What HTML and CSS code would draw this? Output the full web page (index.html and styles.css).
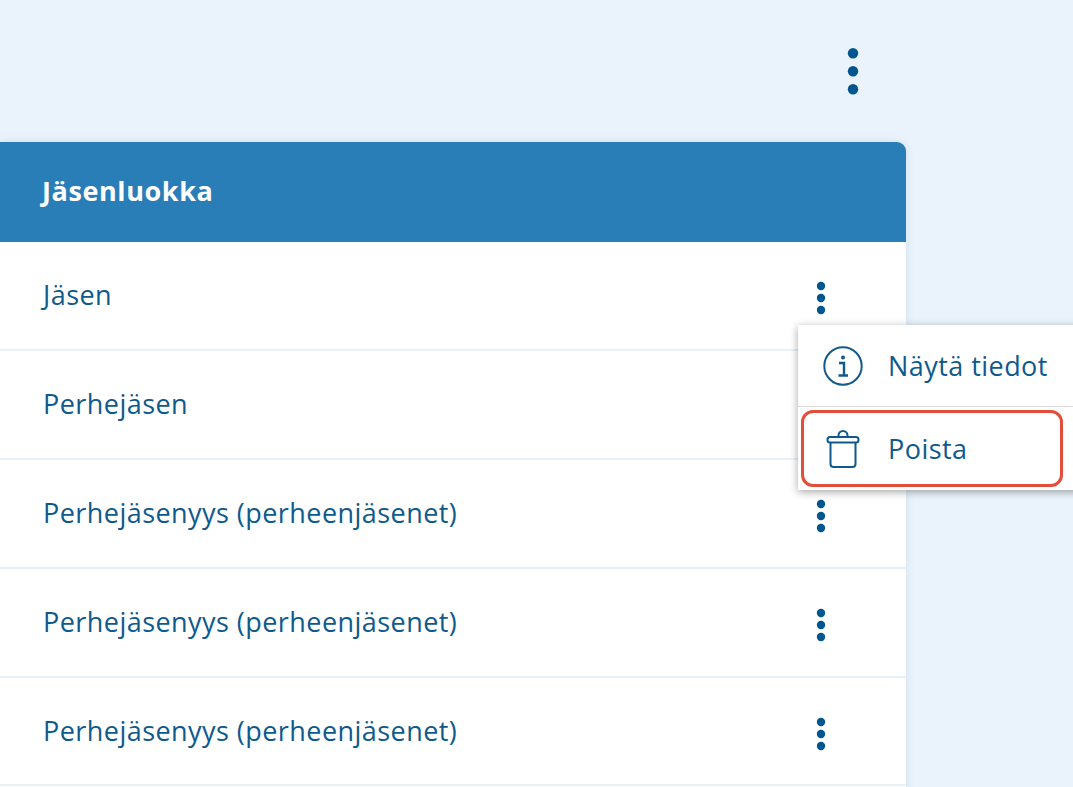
FILE: index.html
```html
<!DOCTYPE html>
<html lang="fi">
<head>
<meta charset="utf-8">
<title>Jäsenluokka</title>
<link rel="stylesheet" href="styles.css">
</head>
<body>
<div class="page">
  <div class="topbar">
    <button class="kebab" aria-label="Valikko"><svg width="12" height="48" viewBox="0 0 12 48"><circle cx="6" cy="5.300" r="5.200"/><circle cx="6" cy="23.300" r="5.200"/><circle cx="6" cy="41.300" r="5.200"/></svg></button>
  </div>
  <section class="card">
    <div class="card-head">Jäsenluokka</div>
    <div class="row"><span>Jäsen</span><button class="kebab row-kebab" aria-label="Valikko"><svg width="12" height="36" viewBox="0 0 12 36"><circle cx="6" cy="6" r="4.200"/><circle cx="6" cy="18" r="4.200"/><circle cx="6" cy="30" r="4.200"/></svg></button></div>
    <div class="row"><span>Perhejäsen</span></div>
    <div class="row"><span>Perhejäsenyys (perheenjäsenet)</span><button class="kebab row-kebab" aria-label="Valikko"><svg width="12" height="36" viewBox="0 0 12 36"><circle cx="6" cy="6" r="4.200"/><circle cx="6" cy="18" r="4.200"/><circle cx="6" cy="30" r="4.200"/></svg></button></div>
    <div class="row"><span>Perhejäsenyys (perheenjäsenet)</span><button class="kebab row-kebab" aria-label="Valikko"><svg width="12" height="36" viewBox="0 0 12 36"><circle cx="6" cy="6" r="4.200"/><circle cx="6" cy="18" r="4.200"/><circle cx="6" cy="30" r="4.200"/></svg></button></div>
    <div class="row"><span>Perhejäsenyys (perheenjäsenet)</span><button class="kebab row-kebab" aria-label="Valikko"><svg width="12" height="36" viewBox="0 0 12 36"><circle cx="6" cy="6" r="4.200"/><circle cx="6" cy="18" r="4.200"/><circle cx="6" cy="30" r="4.200"/></svg></button></div>
    <div class="row"></div>
  </section>
  <div class="menu">
    <div class="menu-item first">
      <svg class="menu-icon" width="40" height="40" viewBox="0 0 40 40" fill="none"><circle cx="20" cy="20" r="18.700" stroke-width="2"/><circle class="fill" cx="20" cy="11.500" r="2"/><path d="M16 17h5v12M15.500 29.500h9.500" stroke-width="2.400"/></svg>
      <span>Näytä tiedot</span>
    </div>
    <div class="menu-item second">
      <svg class="menu-icon" width="40" height="40" viewBox="0 0 40 40" fill="none"><rect x="4.500" y="8" width="31" height="5.500" rx="2.500" stroke-width="2"/><path d="M7.500 13.500V35a3 3 0 0 0 3 3h19a3 3 0 0 0 3-3V13.500M15.500 8V6.500a4.500 4.500 0 0 1 9 0V8" stroke-width="2"/></svg>
      <span>Poista</span>
    </div>
  </div>
</div>
</body>
</html>
```
FILE: styles.css
```css
html, body {
  margin: 0;
  height: 100%;
}
body {
  background: #eaf3fb;
  font-family: "Open Sans", "Liberation Sans", sans-serif;
  color: #0f5a8c;
  overflow: hidden;
}
.page {
  position: relative;
  height: 787px;
  overflow: hidden;
}
.topbar {
  height: 142px;
  width: 906px;
  display: flex;
  justify-content: flex-end;
  align-items: flex-start;
  padding-top: 48px;
  box-sizing: border-box;
  padding-right: 47px;
}
.kebab {
  border: 0;
  background: none;
  padding: 0;
  display: block;
  line-height: 0;
}
.kebab svg { fill: #00568f; display: block; }
.row-kebab { margin-top: 6px; }
.card {
  width: 906px;
  background: #fff;
  border-radius: 0 9px 0 0;
  box-shadow: 0 0 9px rgba(60, 140, 200, 0.16);
}
.card-head {
  height: 100px;
  box-sizing: border-box;
  padding: 0 0 3px 42px;
  background: #2a7eb8;
  border-radius: 0 9px 0 0;
  color: #fff;
  font-weight: 700;
  font-size: 27px;
  letter-spacing: 0.600px;
  display: flex;
  align-items: center;
}
.row {
  height: 108.900px;
  box-sizing: border-box;
  border-bottom: 2px solid #e6f1f9;
  display: flex;
  align-items: center;
  justify-content: space-between;
  padding: 0 79px 1px 43px;
  font-size: 27px;
  letter-spacing: 0.450px;
}
.menu {
  position: absolute;
  left: 798px;
  top: 325px;
  width: 300px;
  height: 165px;
  background: #fff;
  box-shadow: 0 2px 8px rgba(0, 0, 0, 0.35);
}
.menu-item {
  display: flex;
  align-items: center;
  gap: 25px;
  font-size: 27px;
  letter-spacing: 0.450px;
  padding-left: 25px;
  box-sizing: border-box;
}
.menu-item.first {
  height: 82px;
  border-bottom: 1px solid #d9d9d9;
}
.menu-item.second {
  position: absolute;
  left: 3px;
  top: 85px;
  width: 262px;
  height: 77px;
  border: 3px solid #e24e3a;
  border-radius: 12px;
  padding-left: 19px;
}
.menu-icon { stroke: #0f5a8c; flex: none; }
.menu-icon .fill { fill: #0f5a8c; stroke: none; }
```
